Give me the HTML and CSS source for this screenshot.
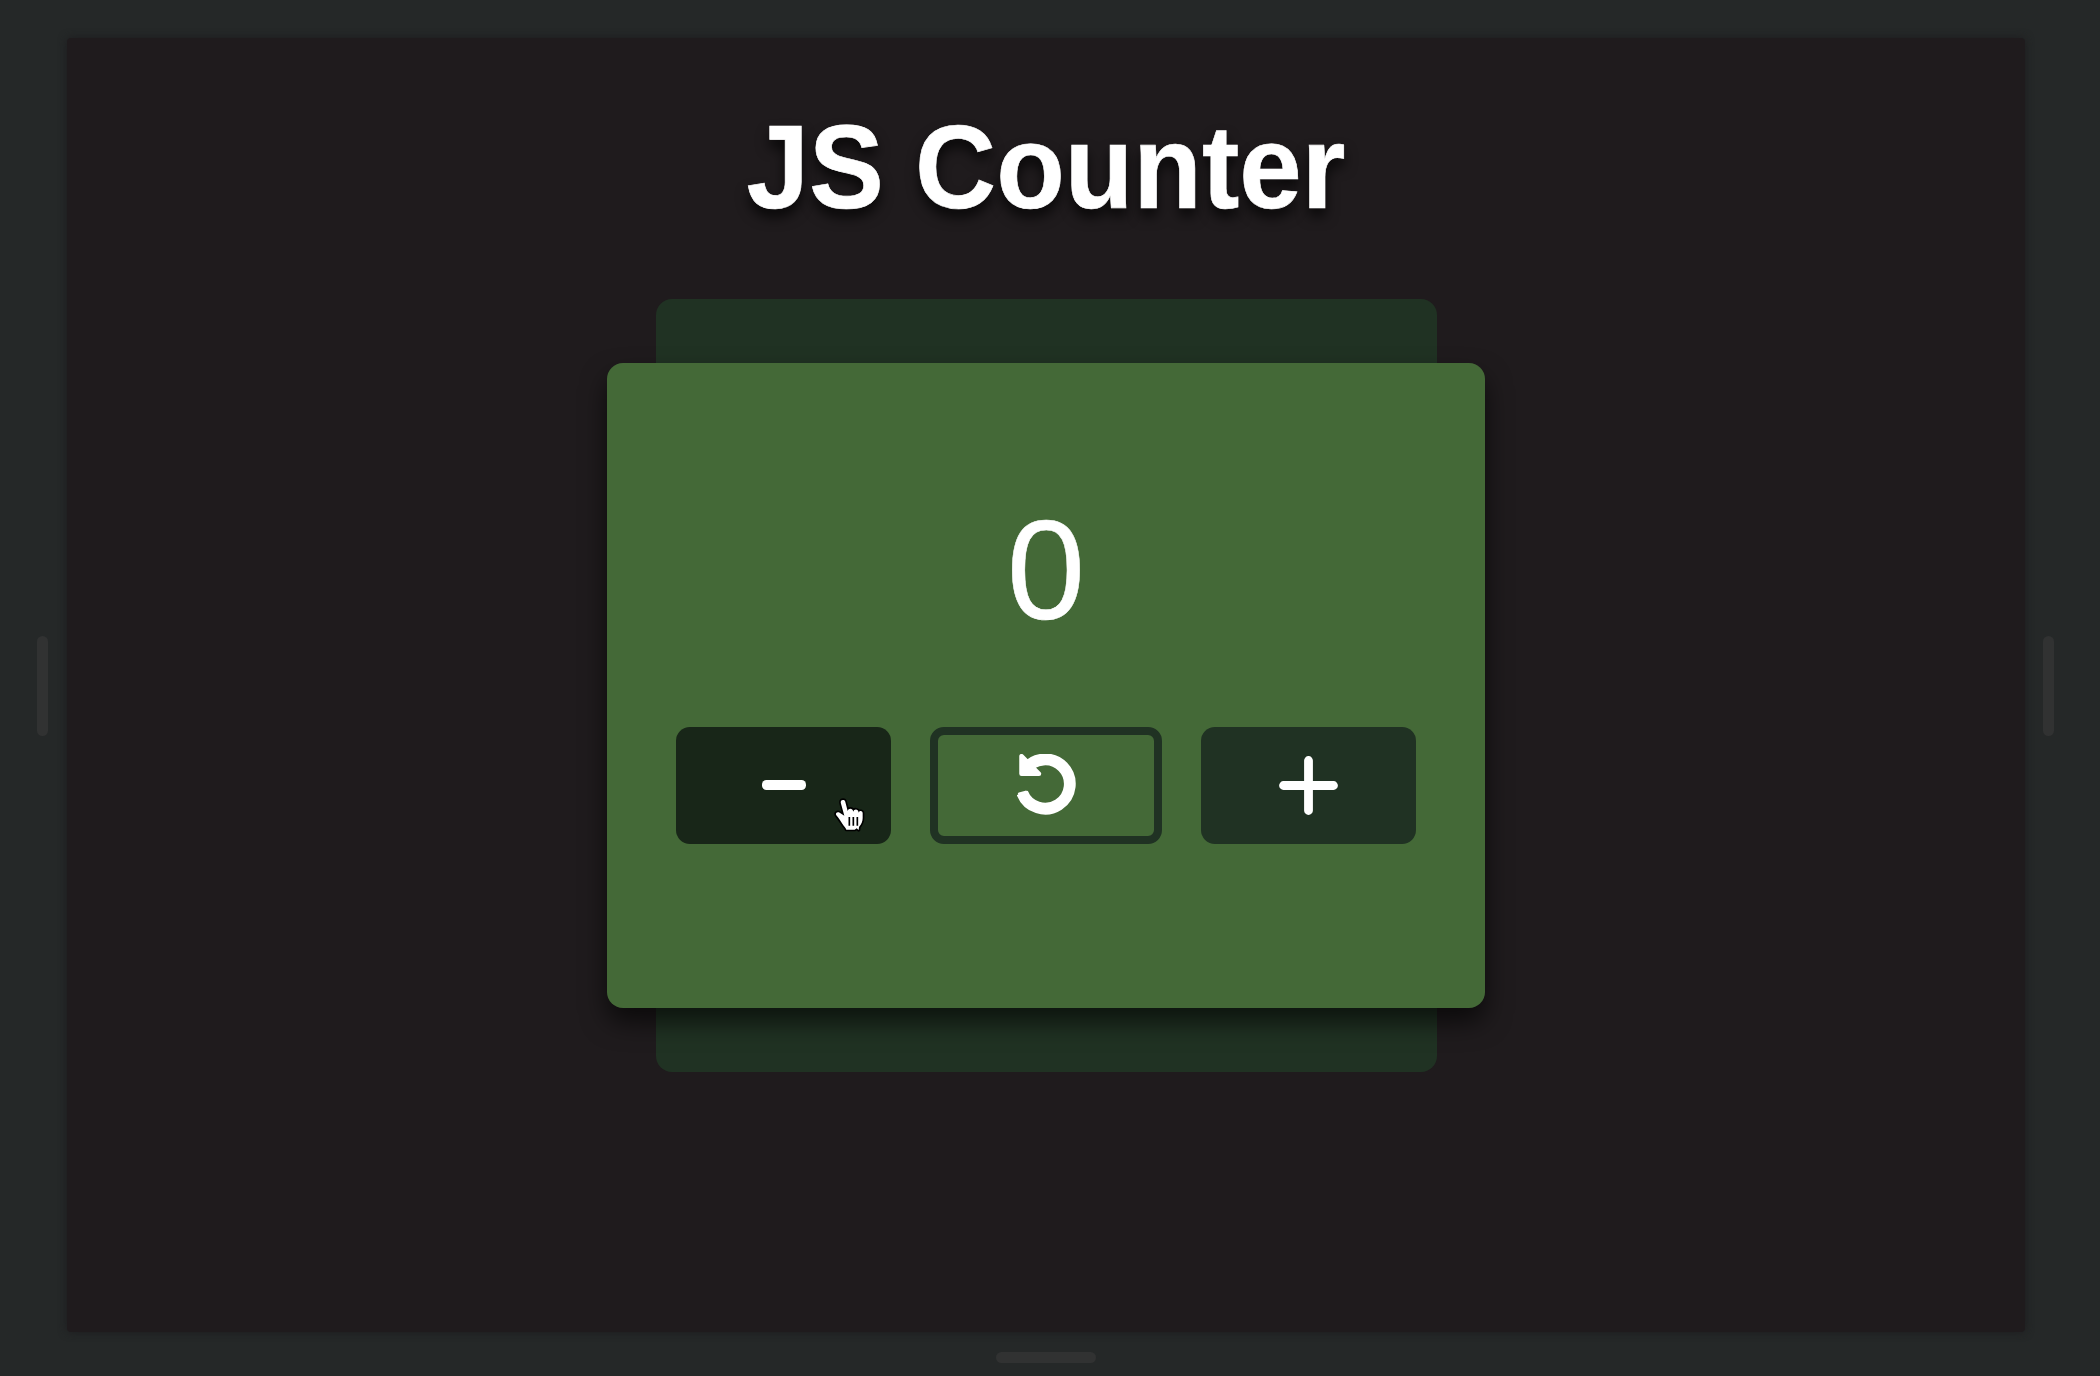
FILE: index.html
```
<!DOCTYPE html>
<html lang="en">
<head>
<meta charset="utf-8">
<title>JS Counter</title>
<link rel="stylesheet" href="styles.css">
</head>
<body>
<div class="frame">
  <span class="handle"></span>
  <main class="viewport">
    <h1 class="title">JS Counter</h1>
    <div class="stack">
      <section class="card">
        <div class="count">0</div>
        <div class="controls">
          <button class="btn btn-minus" aria-label="Decrease">
            <svg width="44" height="10" viewBox="0 0 44 10"><rect width="44" height="10" rx="4.5" fill="#fff"/></svg>
            <svg class="cursor" width="60" height="60" viewBox="0 0 180 180">
              <path d="M69 42c-6 0-8 5-6 11l10 36-14-9c-8-4-14 2-10 8 8 9 13 18 19 27 4 6 9 10 11 16h25l6-4 6 5 1-9c8-10 11-17 11-27V82c0-8-10-9-12-2-1-12-14-12-16-3-2-12-15-11-17-2L76 48c-1-4-3-6-7-6z" fill="#fff" stroke="#000" stroke-width="10" stroke-linejoin="round" paint-order="stroke"/>
              <path d="M88 93v26M100 93v26M112 93v26" stroke="#000" stroke-width="5"/>
            </svg>
          </button>
          <button class="btn btn-reset" aria-label="Reset">
            <svg width="60" height="62" viewBox="0 0 60 62">
              <path d="M8 16A24.6 24.6 0 1 1 5.3 39" fill="none" stroke="#fff" stroke-width="11.8"/>
              <path d="M2.2 39.7L8.8 37.9L9.1 39.8L4 42Z" fill="#fff" stroke="#fff" stroke-width="2.6" stroke-linejoin="round"/>
              <path d="M4.5 2.2V19.8H22Z" fill="#fff" stroke="#fff" stroke-width="4.5" stroke-linejoin="round"/>
            </svg>
          </button>
          <button class="btn" aria-label="Increase">
            <svg width="59" height="59" viewBox="0 0 59 59"><path d="M4.5 29.5H54.5M29.5 4.5V54.5" stroke="#fff" stroke-width="8.8" stroke-linecap="round"/></svg>
          </button>
        </div>
      </section>
    </div>
  </main>
  <span class="handle"></span>
  <span class="handle handle-bottom"></span>
</div>
</body>
</html>
```
FILE: styles.css
```
* { box-sizing: border-box; }

body {
  margin: 0;
  background: #252828;
  color: #fff;
  font-family: "Liberation Sans", Arial, sans-serif;
}

.frame {
  width: 2100px;
  height: 1376px;
  padding: 38px 46px 13px 37px;
  display: grid;
  grid-template: 1294px 1fr / 30px 1958px 1fr;
  align-items: center;
  overflow: hidden;
}

.handle {
  width: 11px;
  height: 100px;
  margin-top: 2px;
  border-radius: 6px;
  background: #313232;
}

.handle:nth-of-type(2) { justify-self: end; }

.handle-bottom {
  grid-column: 2;
  width: 100px;
  height: 11px;
  justify-self: center;
  align-self: end;
}

.viewport {
  height: 1294px;
  display: flex;
  flex-direction: column;
  align-items: center;
  background: #1f1b1d;
  border-radius: 4px;
  box-shadow: 0 0 8px #1c1c1e;
}

.title {
  margin: 64px 0 67px;
  font-size: 112.3px;
  line-height: 130px;
  transform: scaleY(1.05);
  text-shadow: 0 8px 12px rgba(0, 0, 0, .75);
  -webkit-text-stroke: .6px #fff;
  white-space: nowrap;
}

/* Back panel, showing above and below the card */
.stack {
  width: 781px;
  height: 773px;
  display: flex;
  align-items: center;
  justify-content: center;
  border-radius: 16px;
  background: #203223;
}

.card {
  flex: none;
  width: 878px;
  height: 645px;
  padding-top: 127px;
  border-radius: 16px;
  background: #446937;
  box-shadow: 0 14px 26px rgba(0, 0, 0, .62);
}

.count {
  height: 160px;
  font-size: 141px;
  line-height: 160px;
  text-align: center;
  -webkit-text-stroke: .5px #fff;
}

.controls {
  margin-top: 76.5px;
  display: flex;
  justify-content: center;
  gap: 39px;
}

.btn {
  position: relative;
  width: 215px;
  height: 117px;
  padding: 0;
  display: flex;
  align-items: center;
  justify-content: center;
  border: 0;
  border-radius: 14px;
  background: #203223;
}

.btn-minus { background: #182618; }

.btn-reset {
  width: 232px;
  padding-left: 2px;
  border: 8.5px solid #203223;
  background: transparent;
}

.cursor {
  position: absolute;
  left: 144px;
  top: 59px;
}
```
